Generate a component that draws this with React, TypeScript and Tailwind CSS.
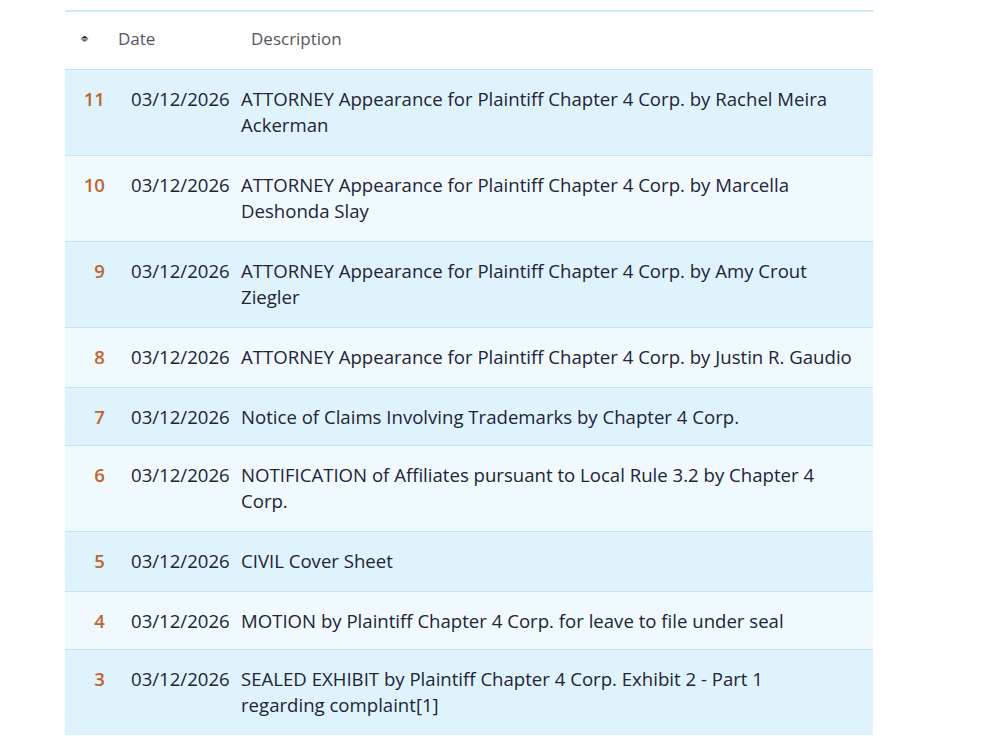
import React from "react";

const rows: { n: number; d: string; t: React.ReactNode; tight?: boolean }[] = [
  { n: 11, d: "03/12/2026", t: "ATTORNEY Appearance for Plaintiff Chapter 4 Corp. by Rachel Meira Ackerman" },
  { n: 10, d: "03/12/2026", t: "ATTORNEY Appearance for Plaintiff Chapter 4 Corp. by Marcella Deshonda Slay" },
  { n: 9, d: "03/12/2026", t: "ATTORNEY Appearance for Plaintiff Chapter 4 Corp. by Amy Crout Ziegler" },
  { n: 8, d: "03/12/2026", t: "ATTORNEY Appearance for Plaintiff Chapter 4 Corp. by Justin R. Gaudio" },
  { n: 7, d: "03/12/2026", t: "Notice of Claims Involving Trademarks by Chapter 4 Corp.", tight: true },
  { n: 6, d: "03/12/2026", t: "NOTIFICATION of Affiliates pursuant to Local Rule 3.2 by Chapter 4 Corp." },
  { n: 5, d: "03/12/2026", t: "CIVIL Cover Sheet" },
  { n: 4, d: "03/12/2026", t: "MOTION by Plaintiff Chapter 4 Corp. for leave to file under seal", tight: true },
  {
    n: 3,
    d: "03/12/2026",
    t: (
      <>
        SEALED EXHIBIT by Plaintiff Chapter 4 Corp. Exhibit 2 - Part 1{" "}
        <span className="whitespace-nowrap">regarding complaint[1]</span>
      </>
    ),
  },
];

export default function App() {
  return (
    <div
      className="w-[984px] h-[736px] overflow-hidden bg-white pt-[10px] pl-[65px]"
      style={{ fontFamily: '"Open Sans", "Noto Sans", sans-serif' }}
    >
      <div className="w-[808px]">
        <div className="h-[2px] bg-[#cdeaf6]" />
        <div className="flex items-center h-[57px] pb-[4px] text-[17px] text-[#55555f]">
          <div className="w-[24px] flex justify-end">
            <svg width="9" height="8" viewBox="0 0 9 8">
              <path d="M0.5 3.6 L4.5 0.8 L8.5 3.6 Z" fill="#2b2b33" />
              <path d="M0.5 4.2 L8.5 4.2 L4.5 7 Z" fill="#6a6a72" />
            </svg>
          </div>
          <div className="ml-[29px] w-[133px]">Date</div>
          <div>Description</div>
        </div>
        {rows.map((r, i) => (
          <div
            key={r.n}
            className={`flex border-t border-[#bfe4f3] pt-[16px] text-[18.6px] leading-[26px] text-[#232336] ${
              r.tight ? "pb-[15px]" : "pb-[17px]"
            } ${i % 2 === 0 ? "bg-[#dff3fc]" : "bg-[#eff9fe]"}`}
          >
            <div className="w-[40px] text-right font-semibold text-[#c0652d]">{r.n}</div>
            <div className="ml-[26px] w-[110px] whitespace-nowrap">{r.d}</div>
            <div className="flex-1 pr-[14px]">{r.t}</div>
          </div>
        ))}
      </div>
    </div>
  );
}
